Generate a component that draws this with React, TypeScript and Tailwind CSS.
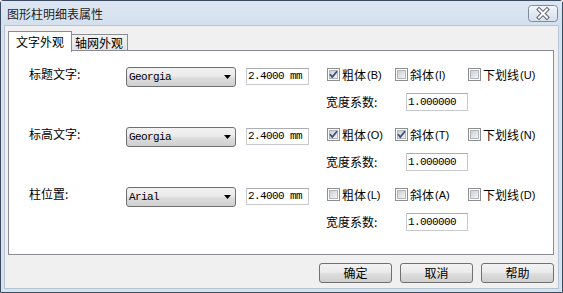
import React from 'react'

const cjk = "font-['Noto_Sans_CJK_SC','Liberation_Sans',sans-serif]"
const mono = "font-['Liberation_Mono',monospace] text-[11px] tracking-[-0.6px]"
const btnBg = 'bg-[linear-gradient(#f2f2f2,#ebebeb_45%,#dddddd_55%,#cfcfcf)]'

function CloseButton() {
  return (
    <svg width="30" height="17" viewBox="0 0 30 17" className="mt-[4px] mr-[4px]">
      <defs>
        <linearGradient id="cb" x1="0" y1="0" x2="0" y2="1">
          <stop offset="0" stopColor="#f3f6fa" />
          <stop offset="1" stopColor="#d5dfeb" />
        </linearGradient>
      </defs>
      <rect x="0.5" y="0.5" width="29" height="16" rx="3" fill="url(#cb)" stroke="#7d8ba1" />
      <path d="M11 4.5 L19 12.5 M19 4.5 L11 12.5" stroke="#5b6373" strokeWidth="4" strokeLinecap="square" />
      <path d="M11 4.5 L19 12.5 M19 4.5 L11 12.5" stroke="#ffffff" strokeWidth="2" strokeLinecap="square" />
    </svg>
  )
}

function CheckBox({ checked }: { checked: boolean }) {
  return (
    <svg width="13" height="13" viewBox="0 0 13 13" className="shrink-0">
      <defs>
        <linearGradient id="cbin" x1="0" y1="0" x2="1" y2="1">
          <stop offset="0" stopColor="#c9ccd1" />
          <stop offset="1" stopColor="#f7f7f7" />
        </linearGradient>
      </defs>
      <rect x="0.5" y="0.5" width="12" height="12" fill="#ffffff" stroke="#8e8f8f" />
      <rect x="2.5" y="2.5" width="8" height="8" fill="url(#cbin)" stroke="#b2b5bb" />
      {checked && (
        <path d="M3 6.2 L5.3 9 L10 3.2" fill="none" stroke="#3b5184" strokeWidth="1.8" />
      )}
    </svg>
  )
}

function Check({ label, hot, checked, width }: { label: string; hot: string; checked: boolean; width?: string }) {
  return (
    <div className={`flex items-center h-[13px] ${width ?? ''}`}>
      <CheckBox checked={checked} />
      <span className="ml-[2px] text-[12px] leading-[12px]">{label}</span>
      <span className="ml-[1px] font-['Liberation_Sans',sans-serif] text-[11px] leading-[12px]">({hot})</span>
    </div>
  )
}

function Combo({ value }: { value: string }) {
  return (
    <div className={`w-[110px] h-[20px] rounded-[3px] border border-[#707070] ${btnBg} flex items-center pl-[2px] pr-[4px] shrink-0`}>
      <span className={`${mono} flex-1`}>{value}</span>
      <svg width="7" height="4" viewBox="0 0 7 4">
        <path d="M0 0 H7 L3.5 4 Z" fill="#000" />
      </svg>
    </div>
  )
}

function TextBox({ value, w, h }: { value: string; w: string; h: string }) {
  return (
    <div className={`${w} ${h} border border-[#c6c9cf] border-t-[#abadb3] bg-white flex items-center pl-[1px] shrink-0`}>
      <span className={mono}>{value}</span>
    </div>
  )
}

type Row = { label: string; font: string; checks: [string, string, boolean][] }

const rows: Row[] = [
  { label: '标题文字:', font: 'Georgia', checks: [['粗体', 'B', true], ['斜体', 'I', false], ['下划线', 'U', false]] },
  { label: '标高文字:', font: 'Georgia', checks: [['粗体', 'O', true], ['斜体', 'T', true], ['下划线', 'N', false]] },
  { label: '柱位置:', font: 'Arial', checks: [['粗体', 'L', false], ['斜体', 'A', false], ['下划线', 'D', false]] },
]

export default function App() {
  return (
    <div className={`${cjk} w-[563px] h-[293px] border border-[#3c4b5f] rounded-t-[3px] bg-[#d7e2ef] flex flex-col text-black`}>
      <div className="h-[24px] flex items-start justify-between bg-[linear-gradient(#dde7f3,#d5e0ee)]">
        <span className="ml-[6px] mt-[7px] text-[12px] leading-[12px] text-[#1e1e1e]">图形柱明细表属性</span>
        <CloseButton />
      </div>

      <div className="flex-1 mx-[3px] mb-[3px] border border-[#b6c3d3] bg-[#f0f0f0] flex flex-col pl-[3px] pr-[4px] pt-[5px]">
        <div className="relative z-10 flex items-end h-[20px] text-[12px] leading-[12px]">
          <div className="w-[64px] h-[21px] -mb-[1px] border border-b-0 border-[#898c95] bg-white pt-[4px] text-center">
            文字外观
          </div>
          <div className="w-[56px] h-[16px] mb-[1px] border border-l-0 border-b-0 border-[#898c95] bg-[linear-gradient(#f3f3f3,#e3e3e3)] pt-[2px] pl-[3px]">
            轴网外观
          </div>
        </div>

        <div className="-mt-[1px] h-[205px] border border-[#898c95] bg-white pt-[16px] pl-[20px]">
          {rows.map((r) => (
            <div key={r.label} className="h-[60px] flex items-start">
              <div className="flex items-start h-[20px]">
                <span className="w-[97px] mt-[1px] text-[12px] leading-[12px]">{r.label}</span>
                <Combo value={r.font} />
                <div className="ml-[10px] mt-[1px]">
                  <TextBox value="2.4000 mm" w="w-[63px]" h="h-[17px]" />
                </div>
              </div>
              <div className="ml-[18px] flex flex-col">
                <div className="mt-[1px] flex">
                  <Check label={r.checks[0][0]} hot={r.checks[0][1]} checked={r.checks[0][2]} width="w-[68px]" />
                  <Check label={r.checks[1][0]} hot={r.checks[1][1]} checked={r.checks[1][2]} width="w-[73px]" />
                  <Check label={r.checks[2][0]} hot={r.checks[2][1]} checked={r.checks[2][2]} />
                </div>
                <div className="mt-[12px] flex items-center -ml-[1px]">
                  <span className="w-[80px] text-[12px] leading-[12px]">宽度系数:</span>
                  <TextBox value="1.000000" w="w-[62px]" h="h-[18px]" />
                </div>
              </div>
            </div>
          ))}
        </div>

        <div className="mt-[8px] flex justify-end gap-[8px] text-[12px] leading-[12px]">
          {['确定', '取消', '帮助'].map((t) => (
            <div key={t} className={`w-[73px] h-[20px] rounded-[3px] border border-[#707070] ${btnBg} flex items-center justify-center`}>
              {t}
            </div>
          ))}
        </div>
      </div>
    </div>
  )
}
